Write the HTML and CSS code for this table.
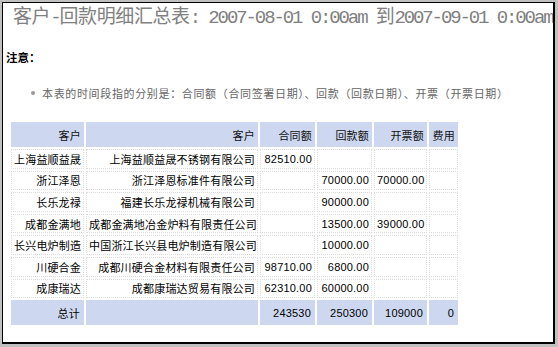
FILE: index.html
```html
<!DOCTYPE html>
<html lang="zh-CN">
<head>
<meta charset="utf-8">
<title>客户-回款明细汇总表</title>
<link rel="stylesheet" href="styles.css">
</head>
<body>
<div class="frame">
  <h1 class="title"><span class="cjk">客户</span>-<span class="cjk">回款明细汇总表</span>: 2007-08-01 0:00am <span class="cjk">到</span>2007-09-01 0:00am</h1>
  <div class="note">注意：</div>
  <ul class="notes">
    <li>本表的时间段指的分别是：合同额（合同签署日期）、回款（回款日期）、开票（开票日期）</li>
  </ul>
  <table class="report">
    <colgroup>
      <col class="c1"><col class="c2"><col class="c3"><col class="c4"><col class="c5"><col class="c6">
    </colgroup>
    <thead>
      <tr class="head">
        <th>客户</th><th>客户</th><th>合同额</th><th>回款额</th><th>开票额</th><th>费用</th>
      </tr>
    </thead>
    <tbody>
      <tr class="row"><td>上海益顺益晟</td><td>上海益顺益晟不锈钢有限公司</td><td>82510.00</td><td></td><td></td><td></td></tr>
      <tr class="row"><td>浙江泽恩</td><td>浙江泽恩标准件有限公司</td><td></td><td>70000.00</td><td>70000.00</td><td></td></tr>
      <tr class="row"><td>长乐龙禄</td><td>福建长乐龙禄机械有限公司</td><td></td><td>90000.00</td><td></td><td></td></tr>
      <tr class="row"><td>成都金满地</td><td>成都金满地冶金炉料有限责任公司</td><td></td><td>13500.00</td><td>39000.00</td><td></td></tr>
      <tr class="row"><td>长兴电炉制造</td><td>中国浙江长兴县电炉制造有限公司</td><td></td><td>10000.00</td><td></td><td></td></tr>
      <tr class="row"><td>川硬合金</td><td>成都川硬合金材料有限责任公司</td><td>98710.00</td><td>6800.00</td><td></td><td></td></tr>
      <tr class="row"><td>成康瑞达</td><td>成都康瑞达贸易有限公司</td><td>62310.00</td><td>60000.00</td><td></td><td></td></tr>
    </tbody>
    <tfoot>
      <tr class="total"><td>总计</td><td></td><td>243530</td><td>250300</td><td>109000</td><td>0</td></tr>
    </tfoot>
  </table>
</div>
</body>
</html>
```
FILE: styles.css
```css
html, body {
  margin: 0;
  padding: 0;
  background: #c0c0c0;
}

.frame {
  box-sizing: border-box;
  height: 342px;
  margin: 2px 3px 3px 2px;
  border-style: solid;
  border-color: #000;
  border-width: 1px 2px 2px 1px;
  background: #fff;
  overflow: hidden;
  font-family: "Liberation Sans", "Noto Sans CJK SC", sans-serif;
  font-size: 11px;
  color: #000;
}

.title {
  margin: 0;
  padding-left: 10px;
  height: 24px;
  line-height: 24px;
  font-family: "Liberation Mono", "Noto Sans CJK SC", monospace;
  font-size: 19px;
  font-weight: normal;
  letter-spacing: -2.1px;
  color: #808080;
  white-space: pre;
}

.title .cjk {
  font-family: "Noto Sans CJK SC", sans-serif;
  letter-spacing: -0.4px;
}

.note {
  margin-top: 22px;
  padding-left: 3px;
  font-family: "Noto Sans CJK SC", sans-serif;
  font-size: 11.5px;
  font-weight: bold;
  line-height: 16px;
}

.notes {
  list-style: none;
  margin: 20px 0 0;
  padding: 0 0 0 28px;
}

.notes li {
  display: flex;
  align-items: center;
  gap: 7px;
  line-height: 16px;
  font-family: "Noto Sans CJK SC", sans-serif;
  font-size: 11px;
  letter-spacing: 0.65px;
  color: #666;
}

.notes li::before {
  content: "";
  flex: none;
  width: 4px;
  height: 4px;
  border-radius: 50%;
  background: #999;
}

.report {
  margin: 19px 0 0 6px;
  table-layout: fixed;
  width: 451px;
  border-collapse: separate;
  border-spacing: 2px;
  letter-spacing: 0.2px;
}

.c1 { width: 73px; }
.c2 { width: 172px; }
.c3 { width: 55px; }
.c4 { width: 55px; }
.c5 { width: 53px; }
.c6 { width: 29px; }

.report th,
.report td {
  padding: 0 3px;
  text-align: right;
  white-space: nowrap;
  overflow: hidden;
  font-weight: normal;
}

.head { height: 25px; }
.head th {
  background: #cdd8f0;
  color: #111;
}

.row { height: 19.6px; }
.row td {
  border: 1px dotted #dcdcdc;
  padding: 0 2px;
}

.total { height: 25px; }
.total td {
  background: #cdd8f0;
  padding-right: 4px;
}
```
